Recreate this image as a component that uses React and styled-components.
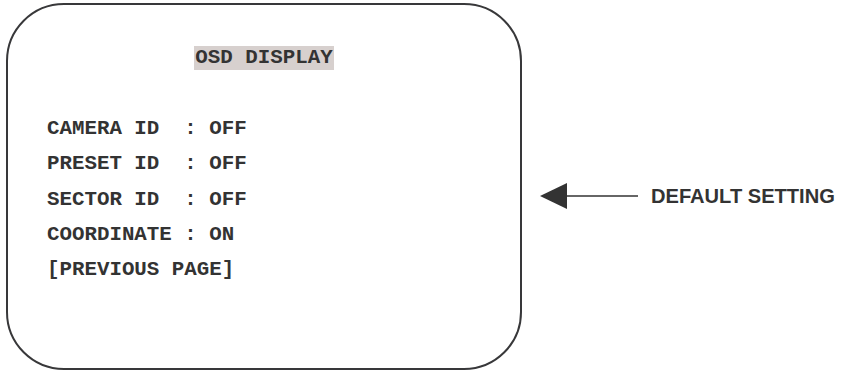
import styled, { createGlobalStyle } from "styled-components";

const GlobalStyle = createGlobalStyle`
  body {
    margin: 0;
    background: #ffffff;
  }
`;

const Page = styled.div`
  display: flex;
  align-items: flex-start;
  width: 845px;
  height: 371px;
  padding: 3px 0 0 6px;
  box-sizing: border-box;
`;

const Screen = styled.div`
  width: 516px;
  height: 367px;
  box-sizing: border-box;
  border: 2px solid #38383a;
  border-radius: 58px;
  padding: 41px 0 0 39px;
  display: flex;
  flex-direction: column;
  font-family: "Liberation Mono", "Courier New", monospace;
  font-weight: bold;
  font-size: 20.8px;
  color: #333333;
`;

const Title = styled.div`
  align-self: center;
  margin-left: -39px;
  background: #d7d0ce;
  line-height: 24px;
  padding: 0 1px;
  margin-bottom: 41px;
`;

const Item = styled.div`
  white-space: pre;
  line-height: 35.3px;
`;

const Callout = styled.div`
  display: flex;
  align-items: center;
  margin: 179px 0 0 18px;
  gap: 12px;
`;

const Label = styled.span`
  font-family: "Liberation Sans", Arial, sans-serif;
  font-weight: bold;
  font-size: 20.1px;
  color: #333333;
`;

const items = [
  "CAMERA ID  : OFF",
  "PRESET ID  : OFF",
  "SECTOR ID  : OFF",
  "COORDINATE : ON",
  "[PREVIOUS PAGE]",
];

function Arrow() {
  return (
    <svg width="99" height="28" viewBox="0 0 99 28">
      <polygon points="0,14 27,1 27,27" fill="#333333" />
      <line x1="26" y1="14" x2="98" y2="14" stroke="#333333" strokeWidth="1.3" />
    </svg>
  );
}

export default function App() {
  return (
    <>
      <GlobalStyle />
      <Page>
        <Screen>
          <Title>OSD DISPLAY</Title>
          {items.map((t) => (
            <Item key={t}>{t}</Item>
          ))}
        </Screen>
        <Callout>
          <Arrow />
          <Label>DEFAULT SETTING</Label>
        </Callout>
      </Page>
    </>
  );
}
